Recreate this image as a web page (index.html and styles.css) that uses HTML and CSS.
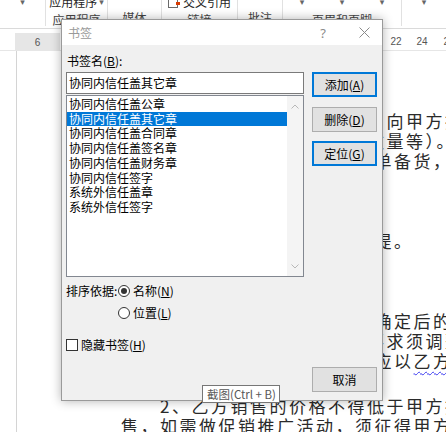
FILE: index.html
```html
<!DOCTYPE html>
<html lang="zh-CN">
<head>
<meta charset="UTF-8" />
<title>书签</title>
<link rel="stylesheet" href="styles.css">
</head>
<body>
  <div class="ribbon">
    <div class="grp g1"><span class="top"><span class="caret">▾</span></span></div>
    <div class="grp g2"><span class="top">应用程序 <span class="caret">▾</span></span><span class="lbl">应用程序</span></div>
    <div class="grp g3"><span class="top"></span><span class="lbl">媒体</span></div>
    <div class="grp g4">
      <span class="top">
        <svg width="13" height="13" viewBox="0 0 13 13"><rect x="0.5" y="0.5" width="9" height="11" fill="#fff" stroke="#6a6a6a"/><rect x="8" y="6" width="4" height="3" fill="#d83b01"/></svg>交叉引用
      </span>
      <span class="lbl">链接</span>
    </div>
    <div class="grp g5"><span class="top"></span><span class="lbl">批注</span></div>
    <div class="grp g6">
      <span class="top carets"><span class="caret">▾</span><span class="caret">▾</span><span class="caret">▾</span></span>
      <span class="lbl">页眉和页脚</span>
    </div>
    <div class="grp g7"><span class="top"><span class="caret">▾</span></span></div>
  </div>

  <div class="ruler">
    <div class="mg">6</div>
    <span class="num n22">22</span>
    <span class="num n24">24</span>
    <span class="num n26">26</span>
  </div>

  <div class="page">
    <div class="ln">乙方在收到订单后3个工作日内向甲方提供</div>
    <div class="ln">2份产品资料（含型号规格及数量等）。</div>
    <div class="ln">乙方应当在接到甲方确认的订单备货，并按约定</div>
    <div class="ln">时间交付。</div>
    <div class="ln"></div>
    <div class="ln">三、订货要求</div>
    <div class="ln">均须以甲方书面确认订单为前提。</div>
    <div class="ln"></div>
    <div class="ln">四、价格条款</div>
    <div class="ln"></div>
    <div class="ln">一、产品价格以双方协商一致确定后的单价执行</div>
    <div class="ln">为准。合同期满第2年如甲方要求须调整价格</div>
    <div class="ln">的，双方须另行协商，调整后应以<span class="wavy">乙方</span>确认为准</div>
    <div class="ln">的价格执行。</div>
    <div class="ln ind gap">2、乙方销售的价格不得低于甲方提供的指导价</div>
    <div class="ln">售，如需做促销推广活动，须征得甲方书面同意。</div>
  </div>

  <div class="dialog">
    <div class="title">
      <span class="name">书签</span>
      <span class="help">?</span>
      <span class="close">
        <svg width="11" height="11" viewBox="0 0 11 11"><path d="M0.5 0.5L10.5 10.5M10.5 0.5L0.5 10.5" stroke="#8a8a8a" stroke-width="1" fill="none"/></svg>
      </span>
    </div>
    <div class="dbody">
      <div class="left">
        <div class="lab">书签名(<u>B</u>):</div>
        <div class="name-input">协同内信任盖其它章</div>
        <div class="list">
          <div class="items">
            <div>协同内信任盖公章</div>
            <div class="sel">协同内信任盖其它章</div>
            <div>协同内信任盖合同章</div>
            <div>协同内信任盖签名章</div>
            <div>协同内信任盖财务章</div>
            <div>协同内信任签字</div>
            <div>系统外信任盖章</div>
            <div>系统外信任签字</div>
          </div>
          <div class="sbar">
            <svg width="8" height="5" viewBox="0 0 8 5"><path d="M0.5 4.5L4 1L7.5 4.5" fill="none" stroke="#b8b8b8"/></svg>
            <svg width="8" height="5" viewBox="0 0 8 5"><path d="M0.5 0.5L4 4L7.5 0.5" fill="none" stroke="#b8b8b8"/></svg>
          </div>
        </div>
        <div class="opt">
          <span>排序依据:</span>
          <span class="ropt"><span class="radio on"></span><span>名称(<u>N</u>)</span></span>
        </div>
        <div class="opt">
          <span></span>
          <span class="ropt"><span class="radio"></span><span>位置(<u>L</u>)</span></span>
        </div>
        <div class="chk"><span class="box"></span><span>隐藏书签(<u>H</u>)</span></div>
      </div>
      <div class="right">
        <div class="btn def add"><span>添加(<u>A</u>)</span></div>
        <div class="btn del"><span>删除(<u>D</u>)</span></div>
        <div class="btn def loc"><span>定位(<u>G</u>)</span></div>
        <div class="btn cancel"><span>取消</span></div>
      </div>
    </div>
  </div>

  <div class="tip">截图(Ctrl + B)</div>
</body>
</html>
```

FILE: styles.css
```css
body {
  margin: 0;
  width: 446px;
  height: 432px;
  overflow: hidden;
  position: relative;
  background: #fff;
  font-family: "Noto Sans CJK SC", "Liberation Sans", sans-serif;
  font-size: 12px;
  color: #000;
}

/* ribbon */
.ribbon {
  display: flex;
  height: 28px;
  border-bottom: 1px solid #dadada;
  overflow: hidden;
}
.grp {
  display: flex;
  flex-direction: column;
  align-items: center;
  box-sizing: border-box;
  height: 26px;
  border-right: 1px solid #e1e1e1;
}
.g1 { width: 46px; }
.g2 { width: 62px; }
.g3 { width: 54px; }
.g4 { width: 76px; }
.g5 { width: 45px; }
.g6 { width: 119px; }
.g7 { flex: 1; border-right: none; }
.top {
  display: flex;
  align-items: center;
  gap: 2px;
  height: 16px;
  line-height: 16px;
  margin-top: -6px;
  color: #262626;
}
.carets {
  width: 100%;
  justify-content: space-around;
}
.caret {
  font-family: "DejaVu Sans", sans-serif;
  font-size: 9px;
  color: #666;
}
.lbl {
  margin-top: 2px;
  line-height: 16px;
  color: #444;
}

/* ruler */
.ruler {
  position: relative;
  display: flex;
  height: 17px;
  margin-top: 4px;
  border-bottom: 1px solid #e6e6e6;
  font-family: "Liberation Sans", sans-serif;
  font-size: 10px;
  color: #555;
}
.ruler .mg {
  margin-left: 15px;
  width: 45px;
  background: #e6e6e6;
  text-align: center;
  line-height: 19px;
}
.num {
  position: absolute;
  top: 3px;
  transform: translateX(-50%);
}
.n22 { left: 396px; }
.n24 { left: 422px; }
.n26 { left: 449px; }

/* document */
.page {
  margin-left: 16px;
  height: 400px;
  border-left: 1px solid #d4d4d4;
  padding: 60px 0 0 104px;
  font-size: 17px;
  letter-spacing: 2.5px;
  line-height: 20px;
  white-space: nowrap;
  color: #2a2a2a;
}
.ln { height: 20px; }
.ln.gap { margin-top: 5px; }
.ln.ind { padding-left: 39px; }
.wavy {
  text-decoration: underline wavy #3a3af0;
  text-decoration-thickness: 1px;
  text-underline-offset: 3px;
}

/* dialog */
.dialog {
  position: absolute;
  left: 61px;
  top: 19px;
  width: 322px;
  height: 382px;
  box-sizing: border-box;
  border: 1px solid #9a9a9a;
  background: #f0f0f0;
  box-shadow: 0 0 10px rgba(0, 0, 0, 0.3);
  display: flex;
  flex-direction: column;
}
.title {
  height: 25px;
  background: #fff;
  display: flex;
  align-items: center;
  color: #999;
}
.title .name {
  flex: 1;
  padding-left: 6px;
}
.title .help {
  width: 46px;
  text-align: center;
  font-family: "Noto Sans", sans-serif;
  font-size: 13px;
  color: #8a8a8a;
}
.title .close {
  width: 36px;
  display: flex;
  justify-content: center;
}
.dbody {
  flex: 1;
  display: grid;
  grid-template-columns: 238px 65px;
  column-gap: 8px;
  padding: 8px 5px 8px 4px;
}
u { text-underline-offset: 1px; }

.left {
  display: flex;
  flex-direction: column;
}
.lab {
  line-height: 16px;
  padding-left: 1px;
}
.name-input {
  margin-top: 3px;
  height: 22px;
  box-sizing: border-box;
  border: 1px solid #7a7a7a;
  background: #fff;
  padding-left: 2px;
  line-height: 20px;
}
.list {
  margin-top: 1px;
  height: 182px;
  box-sizing: border-box;
  border: 1px solid #828790;
  background: #fff;
  display: flex;
}
.items {
  flex: 1;
  padding-top: 1px;
}
.items div {
  line-height: 14.7px;
  padding-left: 2px;
}
.items .sel {
  background: #0078d7;
  color: #fff;
}
.sbar {
  width: 16px;
  background: #f4f4f4;
  display: flex;
  flex-direction: column;
  justify-content: space-between;
  align-items: center;
  padding: 8px 0 7px;
}
.opt {
  margin-top: 6px;
  display: grid;
  grid-template-columns: 52px auto;
  line-height: 16px;
}
.ropt {
  display: flex;
  align-items: center;
  gap: 3px;
}
.radio {
  width: 12px;
  height: 12px;
  box-sizing: border-box;
  border: 1px solid #333;
  border-radius: 50%;
  background: #fff;
  display: flex;
  align-items: center;
  justify-content: center;
}
.radio.on::after {
  content: "";
  width: 6px;
  height: 6px;
  border-radius: 50%;
  background: #333;
}
.chk {
  margin-top: 16px;
  display: flex;
  align-items: center;
  gap: 3px;
  line-height: 16px;
}
.box {
  width: 12px;
  height: 12px;
  box-sizing: border-box;
  border: 1px solid #333;
  background: #fff;
}

.right {
  display: flex;
  flex-direction: column;
}
.btn {
  height: 25px;
  box-sizing: border-box;
  border: 1px solid #adadad;
  background: #e1e1e1;
  display: flex;
  align-items: center;
  justify-content: center;
}
.btn.def { border: 2px solid #0078d7; }
.add { margin-top: 19px; }
.del { margin-top: 10px; }
.loc { margin-top: 9px; }
.cancel { margin-top: auto; }

/* tooltip */
.tip {
  position: absolute;
  left: 202px;
  top: 385px;
  width: 78px;
  height: 18px;
  box-sizing: border-box;
  border: 1px solid #767676;
  background: #fff;
  color: #575757;
  font-size: 11.5px;
  line-height: 16px;
  padding-left: 4px;
  white-space: nowrap;
}
```
